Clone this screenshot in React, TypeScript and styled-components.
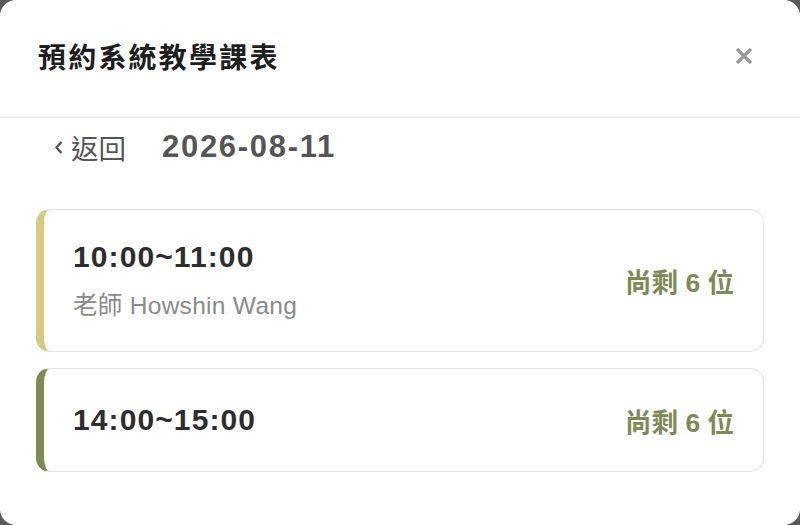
import React from "react";
import styled, { createGlobalStyle } from "styled-components";

const Global = createGlobalStyle`
  html, body { margin: 0; padding: 0; background: #5a5a5a; }
  body { font-family: "Liberation Sans", "Noto Sans CJK TC", sans-serif; }
  * { box-sizing: border-box; }
`;

const Modal = styled.div`
  width: 800px;
  height: 525px;
  background: #fff;
  border-radius: 16px;
  overflow: hidden;
  display: flex;
  flex-direction: column;
`;

const Header = styled.div`
  height: 118px;
  display: flex;
  align-items: center;
  justify-content: space-between;
  padding: 0 46px 4px 38px;
  border-bottom: 2px solid #f0f0f0;
`;

const Title = styled.h1`
  margin: 0;
  font-size: 28px;
  letter-spacing: 2.2px;
  font-weight: 700;
  color: #1e1e1e;
  font-family: "Noto Sans CJK TC", sans-serif;
`;

const Close = styled.button`
  border: 0;
  background: none;
  padding: 0;
  width: 20px;
  height: 20px;
  display: flex;
  align-items: center;
  justify-content: center;
  cursor: pointer;
`;

const Body = styled.div`
  padding: 0 36px 0 36px;
  display: flex;
  flex-direction: column;
`;

const NavRow = styled.div`
  display: flex;
  align-items: center;
  height: 58px;
  padding-left: 17px;
  gap: 36px;
  margin-bottom: 33px;
`;

const Back = styled.span`
  display: flex;
  align-items: center;
  gap: 6px;
  color: #555;
  font-size: 27.5px;
  font-family: "Noto Sans CJK TC", sans-serif;
  font-weight: 400;
`;

const DateText = styled.span`
  font-size: 31px;
  font-weight: 700;
  color: #555;
  letter-spacing: 1.7px;
`;

const List = styled.div`
  display: flex;
  flex-direction: column;
  gap: 16px;
`;

const Card = styled.div<{ $accent: string; $tall?: boolean }>`
  height: ${(p) => (p.$tall ? "143px" : "104px")};
  border: 1.5px solid #e2e2e2;
  border-left: 8px solid ${(p) => p.$accent};
  border-radius: 14px;
  display: flex;
  align-items: center;
  justify-content: space-between;
  padding: 0 29px 0 29px;
`;

const Info = styled.div`
  display: flex;
  flex-direction: column;
  gap: 12px;
`;

const Time = styled.div`
  font-size: 30px;
  font-weight: 700;
  color: #2d2d2d;
  letter-spacing: 1.1px;
`;

const Teacher = styled.div`
  font-size: 24.5px;
  color: #8a8a8a;
  font-family: "Liberation Sans", "Noto Sans CJK TC", sans-serif;
  letter-spacing: 0.3px;
`;

const Seats = styled.div`
  font-size: 26.5px;
  font-weight: 700;
  color: #7d8a55;
  font-family: "Liberation Sans", "Noto Sans CJK TC", sans-serif;
`;

const slots = [
  { time: "10:00~11:00", teacher: "老師 Howshin Wang", accent: "#d6c984", seats: "尚剩 6 位" },
  { time: "14:00~15:00", teacher: "", accent: "#7d8a55", seats: "尚剩 6 位" },
];

export default function App() {
  return (
    <>
      <Global />
      <Modal>
        <Header>
          <Title>預約系統教學課表</Title>
          <Close aria-label="close">
            <svg width="18" height="18" viewBox="0 0 18 18">
              <path d="M2 2 L16 16 M16 2 L2 16" stroke="#9a9a9a" strokeWidth="3.4" strokeLinecap="butt" />
            </svg>
          </Close>
        </Header>
        <Body>
          <NavRow>
            <Back>
              <svg width="12" height="16" viewBox="0 0 12 16">
                <path d="M8.5 3 L3.5 8.5 L8.5 14" stroke="#555" strokeWidth="2.4" fill="none" />
              </svg>
              返回
            </Back>
            <DateText>2026-08-11</DateText>
          </NavRow>
          <List>
            {slots.map((s) => (
              <Card key={s.time} $accent={s.accent} $tall={!!s.teacher}>
                <Info>
                  <Time>{s.time}</Time>
                  {s.teacher && <Teacher>{s.teacher}</Teacher>}
                </Info>
                <Seats>{s.seats}</Seats>
              </Card>
            ))}
          </List>
        </Body>
      </Modal>
    </>
  );
}
